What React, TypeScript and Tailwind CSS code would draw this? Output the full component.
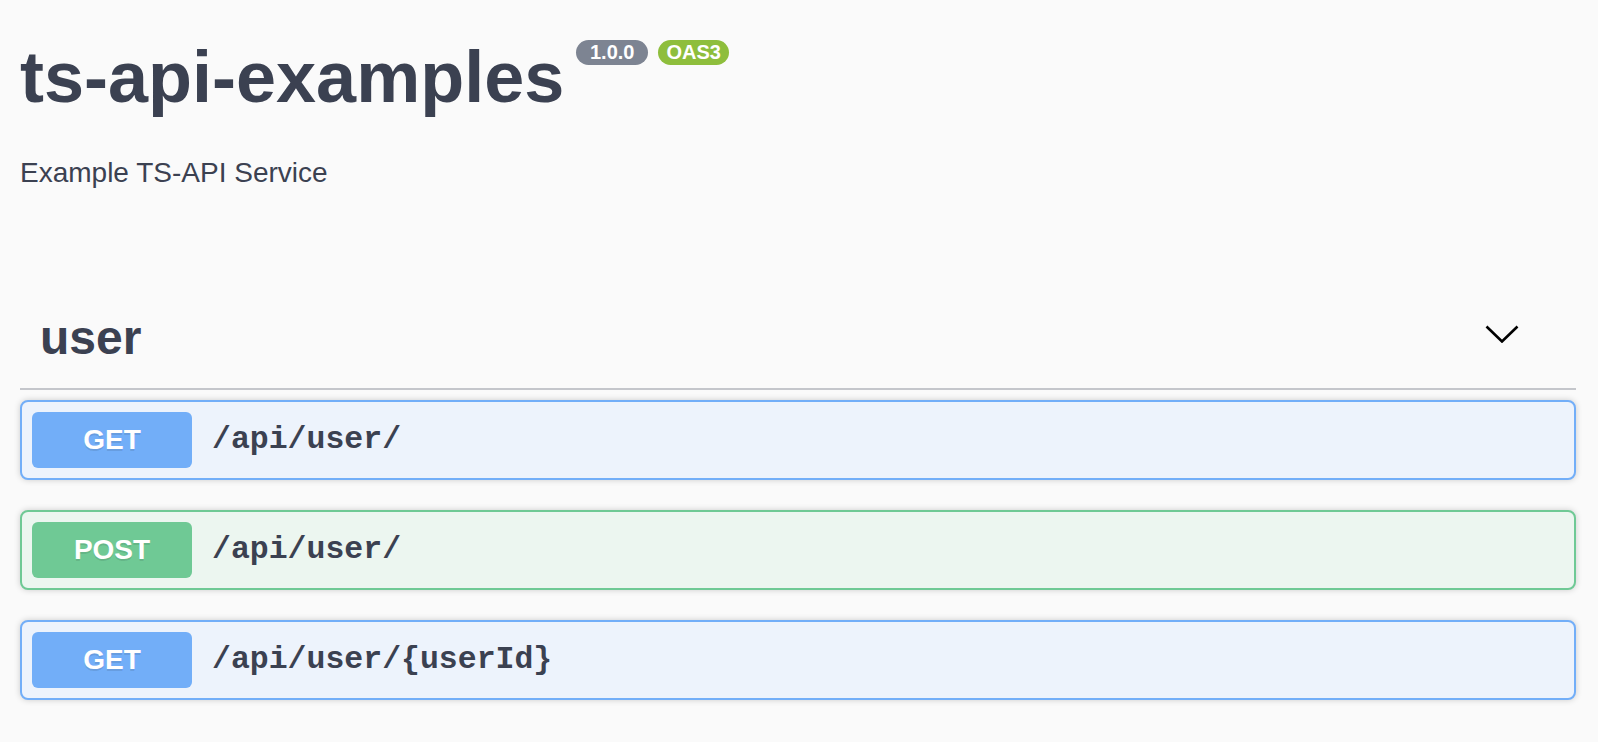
const ops = [
  { method: "GET", path: "/api/user/", badge: "bg-[#72aef8]", box: "bg-[#edf3fc] border-[#72aef8]" },
  { method: "POST", path: "/api/user/", badge: "bg-[#6fc995]", box: "bg-[#ecf6f0] border-[#6fc995]" },
  { method: "GET", path: "/api/user/{userId}", badge: "bg-[#72aef8]", box: "bg-[#edf3fc] border-[#72aef8]" },
];

function Chevron() {
  return (
    <svg width="34" height="18" viewBox="0 0 34 18" className="mb-[9px]">
      <polyline points="1.5,1.5 17,16.5 32.5,1.5" fill="none" stroke="#000" strokeWidth="2.6" />
    </svg>
  );
}

function Operation({ method, path, badge, box }: { method: string; path: string; badge: string; box: string }) {
  return (
    <div className={`flex items-center border-2 rounded-[8px] p-[10px] mb-[30px] shadow-[0_0_6px_rgba(0,0,0,0.19)] ${box}`}>
      <div
        className={`w-[160px] h-[56px] rounded-[6px] flex items-center justify-center text-white font-bold text-[28px] [text-shadow:0_2px_0_rgba(0,0,0,0.1)] ${badge}`}
      >
        {method}
      </div>
      <span className="px-[20px] text-[31.5px] font-bold text-[#3b4151] font-['Liberation_Mono',monospace]">{path}</span>
    </div>
  );
}

export default function App() {
  return (
    <div className="min-h-screen bg-[#fafafa] pl-[20px] pr-[22px] text-[#3b4151] font-['Liberation_Sans',Arial,sans-serif]">
      {/* info */}
      <div className="flex items-start pt-[41px]">
        <h1 className="text-[72px] leading-[72px] font-bold">ts-api-examples</h1>
        <div className="flex gap-[10px] ml-[12px] mt-[-1px]">
          <span className="w-[72px] h-[25px] rounded-full bg-[#7d8492] text-white font-bold text-[20px] leading-[25px] text-center">1.0.0</span>
          <span className="w-[71px] h-[25px] rounded-full bg-[#8ebe3c] text-white font-bold text-[20px] leading-[25px] text-center">OAS3</span>
        </div>
      </div>
      <p className="mt-[46px] text-[28px] leading-[28px]">Example TS-API Service</p>

      {/* tag */}
      <div className="mt-[107px] flex items-center pl-[20px] pr-[57px] pt-[20px] pb-[26px] border-b-2 border-[#c4c6cb]">
        <span className="text-[48px] leading-[48px] font-bold">user</span>
        <div className="ml-auto">
          <Chevron />
        </div>
      </div>
      <div className="mt-[10px]">
        {ops.map((o, i) => (
          <Operation key={i} {...o} />
        ))}
      </div>
    </div>
  );
}
